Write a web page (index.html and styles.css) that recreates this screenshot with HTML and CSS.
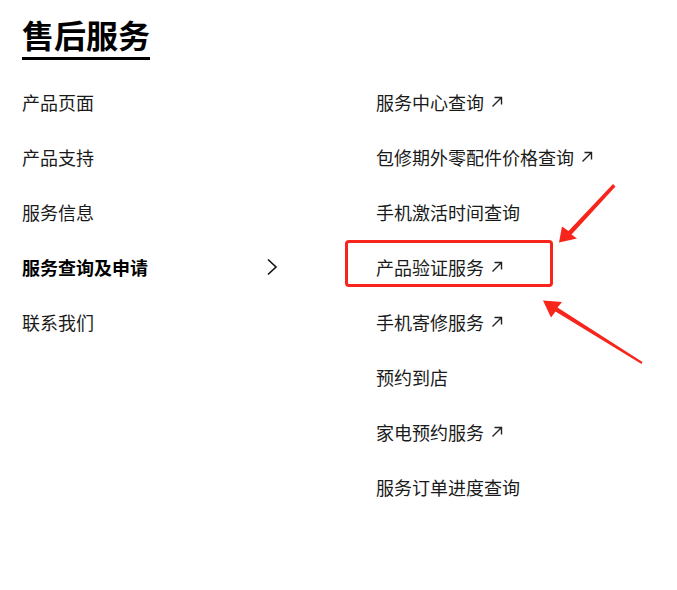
FILE: index.html
```html
<!DOCTYPE html>
<html lang="zh-CN">
<head>
    <meta charset="UTF-8">
    <meta name="viewport" content="width=device-width, initial-scale=1.0">
    <title>售后服务</title>
    <link rel="stylesheet" href="styles.css">
</head>
<body>
    <div class="page">
        <h1 class="title">售后服务</h1>

        <div class="menu">
            <ul class="menu-left">
                <li>产品页面</li>
                <li>产品支持</li>
                <li>服务信息</li>
                <li class="active">
                    <span>服务查询及申请</span>
                    <svg class="chevron" width="12" height="18" viewBox="0 0 12 18">
                        <polyline points="2,1.5 10,9 2,16.5" fill="none" stroke="#111" stroke-width="1.6"/>
                    </svg>
                </li>
                <li>联系我们</li>
            </ul>

            <ul class="menu-right">
                <li>服务中心查询 <svg class="ext" width="12" height="12" viewBox="0 0 12 12"><path d="M1.5 10.5 L10.5 1.5 M3.5 1.5 H10.5 V8.5" fill="none" stroke="#222" stroke-width="1.4"/></svg></li>
                <li>包修期外零配件价格查询 <svg class="ext" width="12" height="12" viewBox="0 0 12 12"><path d="M1.5 10.5 L10.5 1.5 M3.5 1.5 H10.5 V8.5" fill="none" stroke="#222" stroke-width="1.4"/></svg></li>
                <li>手机激活时间查询</li>
                <li>产品验证服务 <svg class="ext" width="12" height="12" viewBox="0 0 12 12"><path d="M1.5 10.5 L10.5 1.5 M3.5 1.5 H10.5 V8.5" fill="none" stroke="#222" stroke-width="1.4"/></svg></li>
                <li>手机寄修服务 <svg class="ext" width="12" height="12" viewBox="0 0 12 12"><path d="M1.5 10.5 L10.5 1.5 M3.5 1.5 H10.5 V8.5" fill="none" stroke="#222" stroke-width="1.4"/></svg></li>
                <li>预约到店</li>
                <li>家电预约服务 <svg class="ext" width="12" height="12" viewBox="0 0 12 12"><path d="M1.5 10.5 L10.5 1.5 M3.5 1.5 H10.5 V8.5" fill="none" stroke="#222" stroke-width="1.4"/></svg></li>
                <li>服务订单进度查询</li>
            </ul>
        </div>

        <!-- annotation: red box and arrows -->
        <svg class="marks" width="677" height="590" viewBox="0 0 677 590">
            <rect x="346.5" y="241.5" width="205" height="44" rx="2.5" fill="none" stroke="#f7251c" stroke-width="3"/>
            <polygon points="613,184 615.5,186.5 571.5,234.5 577,238.5 559,242.5 562,226.5 568.5,231" fill="#f7251c"/>
            <polygon points="642.5,362 641.5,364 555.5,311.5 551,317.5 543,300.5 562,302 557.5,307.5" fill="#f7251c"/>
        </svg>
    </div>
</body>
</html>
```

FILE: styles.css
```css
body {
    margin: 0;
    background: #fff;
    font-family: "Noto Sans CJK SC", "Noto Sans", sans-serif;
    color: #1a1a1a;
}
.page {
    position: relative;
    width: 677px;
    height: 590px;
    padding: 0 22px;
    box-sizing: border-box;
}
.title {
    display: inline-block;
    margin: 14px 0 0;
    padding-bottom: 3px;
    font-size: 32px;
    line-height: 40px;
    font-weight: 700;
    color: #000;
    border-bottom: 3px solid #000;
}
.menu {
    display: flex;
    margin-top: 14px;
}
.menu ul {
    list-style: none;
    margin: 0;
    padding: 0;
}
.menu li {
    display: flex;
    align-items: center;
    height: 55px;
    font-size: 18px;
    white-space: nowrap;
}
.menu .menu-left {
    flex: 0 0 258px;
    margin-right: 96px;
}
.menu-left .active {
    justify-content: space-between;
    font-weight: 700;
    color: #000;
}
.chevron {
    margin-right: 2px;
}
.ext {
    margin-left: 7px;
}
.marks {
    position: absolute;
    top: 0;
    left: 0;
    pointer-events: none;
}
```
